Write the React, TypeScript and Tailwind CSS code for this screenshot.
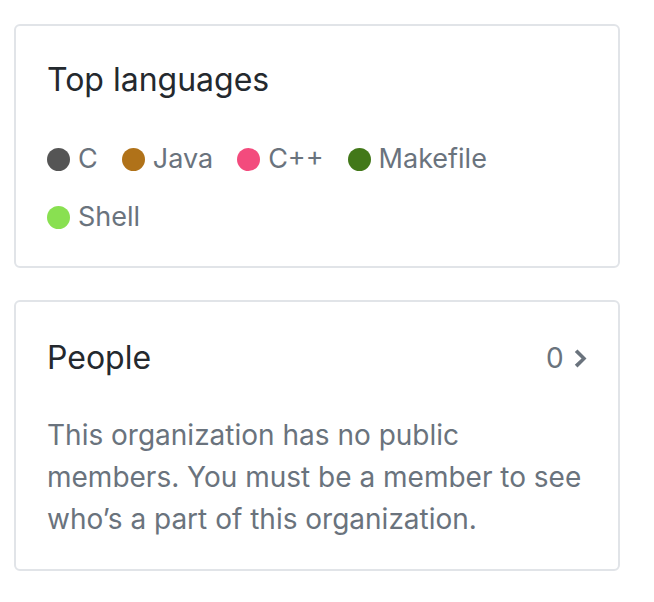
const LANGS = [
  { name: "C", color: "bg-[#555555]" },
  { name: "Java", color: "bg-[#b07219]" },
  { name: "C++", color: "bg-[#f34b7d]" },
  { name: "Makefile", color: "bg-[#427819]" },
  { name: "Shell", color: "bg-[#89e051]" },
]

export default function App() {
  return (
    <div className="min-h-[602px] w-[654px] bg-white pt-[24px] pl-[14px] font-['Inter','Liberation_Sans',sans-serif]">
      {/* Top languages */}
      <div className="w-[606px] rounded-[6px] border-2 border-[#e1e4e8] px-[31px] pt-[34px] pb-[28px]">
        <h2 className="text-[32px] leading-[40px] text-[#24292e]">Top languages</h2>
        <div className="mt-[38px] flex flex-wrap gap-x-[24px] gap-y-[16px]">
          {LANGS.map(l => (
            <span key={l.name} className="flex items-center gap-[8px] text-[27px] leading-[42px] text-[#6a737d]">
              <span className={`inline-block h-[23px] w-[23px] rounded-full ${l.color}`} />
              {l.name}
            </span>
          ))}
        </div>
      </div>

      {/* People */}
      <div className="mt-[32px] w-[606px] rounded-[6px] border-2 border-[#e1e4e8] px-[31px] pt-[35px] pb-[29px]">
        <div className="flex items-center justify-between">
          <h2 className="text-[32px] leading-[40px] text-[#24292e]">People</h2>
          <span className="flex items-center gap-[9px] text-[28px] text-[#6a737d]">
            0
            <svg width="14.4" height="28.8" viewBox="0 0 8 16" fill="#6a737d">
              <path d="M7.5 8l-5 5L1 11.5 4.75 8 1 4.5 2.5 3l5 5z" />
            </svg>
          </span>
        </div>
        <p className="mt-[35px] pr-[4px] text-[28px] leading-[42px] text-[#6a737d]">
          This organization has no public members. You must be a member to see who’s a part of this organization.
        </p>
      </div>
    </div>
  )
}
